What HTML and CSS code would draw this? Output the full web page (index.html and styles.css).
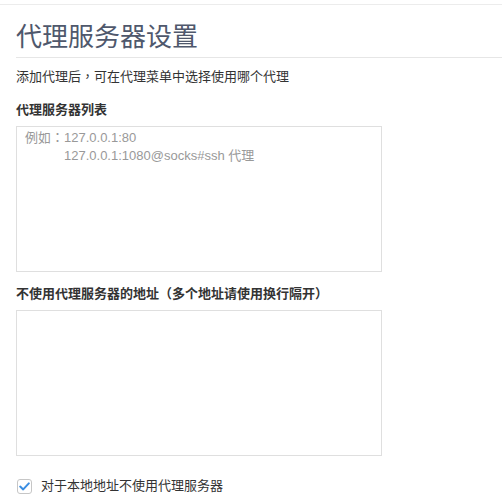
FILE: index.html
```html
<!DOCTYPE html>
<html lang="zh-CN">
<head>
<meta charset="utf-8">
<title>代理服务器设置</title>
<link rel="stylesheet" href="styles.css">
</head>
<body>
<div class="page">
  <h1 class="title">代理服务器设置</h1>
  <p class="desc">添加代理后<span class="punc" lang="zh-TW">，</span>可在代理菜单中选择使用哪个代理</p>
  <div class="field">
    <label class="field-label" for="list">代理服务器列表</label>
    <textarea id="list" class="box" lang="zh-TW" placeholder="例如：127.0.0.1:80&#10;　　　127.0.0.1:1080@socks#ssh 代理"></textarea>
  </div>
  <div class="field">
    <label class="field-label" for="bypass">不使用代理服务器的地址<span class="punc" lang="zh-TW">（</span>多个地址请使用换行隔开<span class="punc" lang="zh-TW">）</span></label>
    <textarea id="bypass" class="box"></textarea>
  </div>
  <label class="check-row">
    <span class="check">
      <svg width="11" height="9" viewBox="0 0 11 9"><path d="M1.2 4.6 L4.2 7.4 L9.8 1.4" fill="none" stroke="#3b8ee2" stroke-width="2" stroke-linecap="round" stroke-linejoin="round"/></svg>
    </span>
    <span class="check-text">对于本地地址不使用代理服务器</span>
  </label>
</div>
</body>
</html>
```
FILE: styles.css
```css
html, body {
  margin: 0;
  padding: 0;
  background: #fff;
}
body {
  font-family: "Liberation Sans", "Noto Sans CJK SC", sans-serif;
  color: #333;
  font-size: 13px;
}
.page {
  margin-top: 4px;
  border-top: 1px solid #ececec;
  padding-bottom: 20px;
}
.title {
  margin: 0 0 0 16px;
  padding: 17px 0 5px 0;
  font-size: 26px;
  line-height: 30px;
  font-weight: normal;
  color: #4f586c;
  border-bottom: 1px solid #e6e6e6;
}
.desc {
  margin: 10px 16px 0;
  line-height: 18px;
  height: 18px;
}
.punc {
  font-family: "Noto Sans CJK TC", "Noto Sans CJK SC", sans-serif;
  line-height: 10px;
}
.field {
  display: flex;
  flex-direction: column;
  margin: 15px 16px 0;
}
.field + .field {
  margin-top: 13px;
}
.field-label {
  font-weight: bold;
  line-height: 18px;
  height: 18px;
  margin-bottom: 7px;
}
.box {
  box-sizing: border-box;
  width: 366px;
  height: 146px;
  border: 1px solid #dfdfdf;
  padding: 2px 8px;
  font-family: "Liberation Sans", "Noto Sans CJK TC", "Noto Sans CJK SC", sans-serif;
  font-size: 13px;
  line-height: 18px;
  color: #333;
  resize: none;
  outline: none;
  margin: 0;
}
.box::placeholder {
  color: #999;
}
.check-row {
  display: flex;
  align-items: center;
  gap: 9px;
  margin: 21px 17px 0;
  line-height: 18px;
}
.check {
  box-sizing: border-box;
  width: 15px;
  height: 15px;
  border: 1px solid #c6c6c6;
  border-radius: 3px;
  display: flex;
  align-items: center;
  justify-content: center;
}
.check-text {
  color: #333;
}
```
